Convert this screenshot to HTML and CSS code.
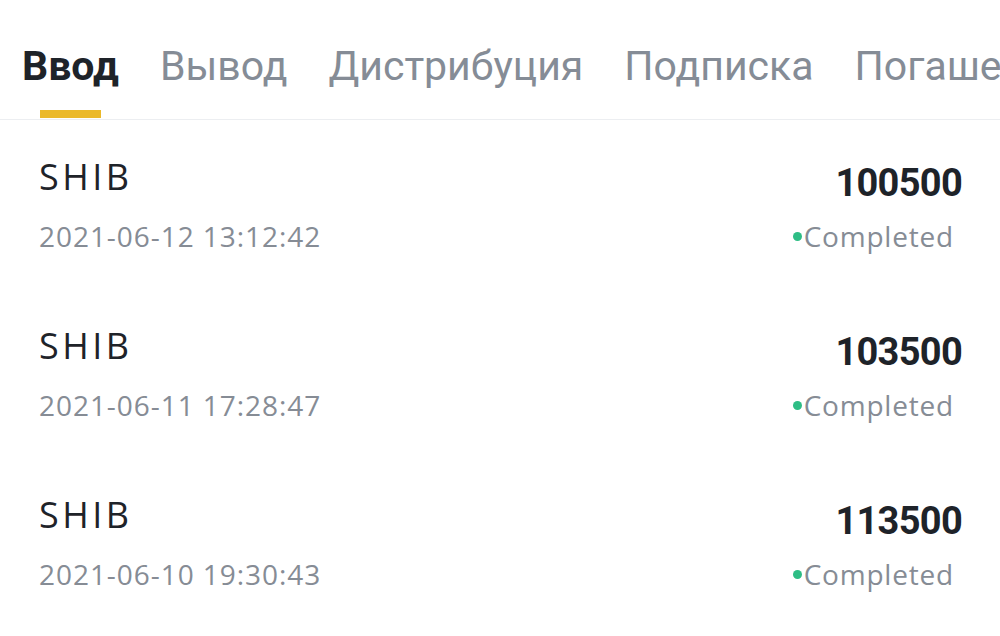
FILE: index.html
```html
<!DOCTYPE html>
<html lang="ru">
<head>
<meta charset="utf-8">
<title>История</title>
<link rel="stylesheet" href="styles.css">
</head>
<body>
<div class="page">
  <nav class="tabs">
    <div class="tab active"><span class="tab-label">Ввод</span><span class="tab-bar"></span></div>
    <div class="tab"><span class="tab-label">Вывод</span></div>
    <div class="tab"><span class="tab-label">Дистрибуция</span></div>
    <div class="tab"><span class="tab-label">Подписка</span></div>
    <div class="tab"><span class="tab-label">Погашение</span></div>
  </nav>
  <ul class="list">
    <li class="row">
      <div class="left"><div class="coin">SHIB</div><div class="date">2021-06-12 13:12:42</div></div>
      <div class="right"><div class="amount">100500</div><div class="status"><span class="dot"></span>Completed</div></div>
    </li>
    <li class="row">
      <div class="left"><div class="coin">SHIB</div><div class="date">2021-06-11 17:28:47</div></div>
      <div class="right"><div class="amount">103500</div><div class="status"><span class="dot"></span>Completed</div></div>
    </li>
    <li class="row">
      <div class="left"><div class="coin">SHIB</div><div class="date">2021-06-10 19:30:43</div></div>
      <div class="right"><div class="amount">113500</div><div class="status"><span class="dot"></span>Completed</div></div>
    </li>
  </ul>
</div>
</body>
</html>
```
FILE: styles.css
```css
html, body {
  margin: 0;
  padding: 0;
  background: #ffffff;
}
body {
  font-family: Roboto, "Open Sans", "DejaVu Sans", sans-serif;
  color: #1e2329;
}
.page {
  width: 1000px;
  height: 636px;
  overflow: hidden;
}
.tabs {
  display: flex;
  gap: 41px;
  padding: 42px 0 0 22px;
  border-bottom: 1px solid #eceef1;
  white-space: nowrap;
  overflow: hidden;
  height: 77px;
}
.tab {
  display: flex;
  flex-direction: column;
  flex: none;
}
.tab-label {
  font-size: 41px;
  line-height: 48px;
  color: #858c96;
}
.tab.active .tab-label {
  font-weight: 700;
  color: #1e2329;
}
.tab-bar {
  align-self: center;
  width: 61px;
  height: 8px;
  margin-top: 20px;
  background: #ebb92a;
}
.list {
  list-style: none;
  margin: 0;
  padding: 0;
}
.row {
  display: flex;
  justify-content: space-between;
  height: 169px;
  padding: 0 38px 0 39px;
  box-sizing: border-box;
}
.left {
  padding-top: 37px;
}
.coin {
  font-family: "Open Sans", sans-serif;
  font-size: 36px;
  line-height: 40px;
  letter-spacing: 3.5px;
  color: #1e2329;
}
.date {
  font-family: "Open Sans", sans-serif;
  margin-top: 23px;
  font-size: 28px;
  line-height: 32px;
  letter-spacing: 0.95px;
  color: #868c95;
}
.right {
  display: flex;
  flex-direction: column;
  align-items: flex-end;
  padding-top: 43px;
}
.amount {
  font-family: Roboto, sans-serif;
  font-weight: 700;
  font-size: 38px;
  line-height: 40px;
  letter-spacing: -0.7px;
  color: #1e2329;
}
.status {
  font-family: "Open Sans", sans-serif;
  display: flex;
  align-items: center;
  margin-top: 17px;
  margin-right: 8px;
  font-size: 28px;
  line-height: 32px;
  letter-spacing: 0.8px;
  color: #868c95;
}
.dot {
  width: 9px;
  height: 9px;
  border-radius: 50%;
  background: #2ebd85;
  margin-right: 2px;
}
```
